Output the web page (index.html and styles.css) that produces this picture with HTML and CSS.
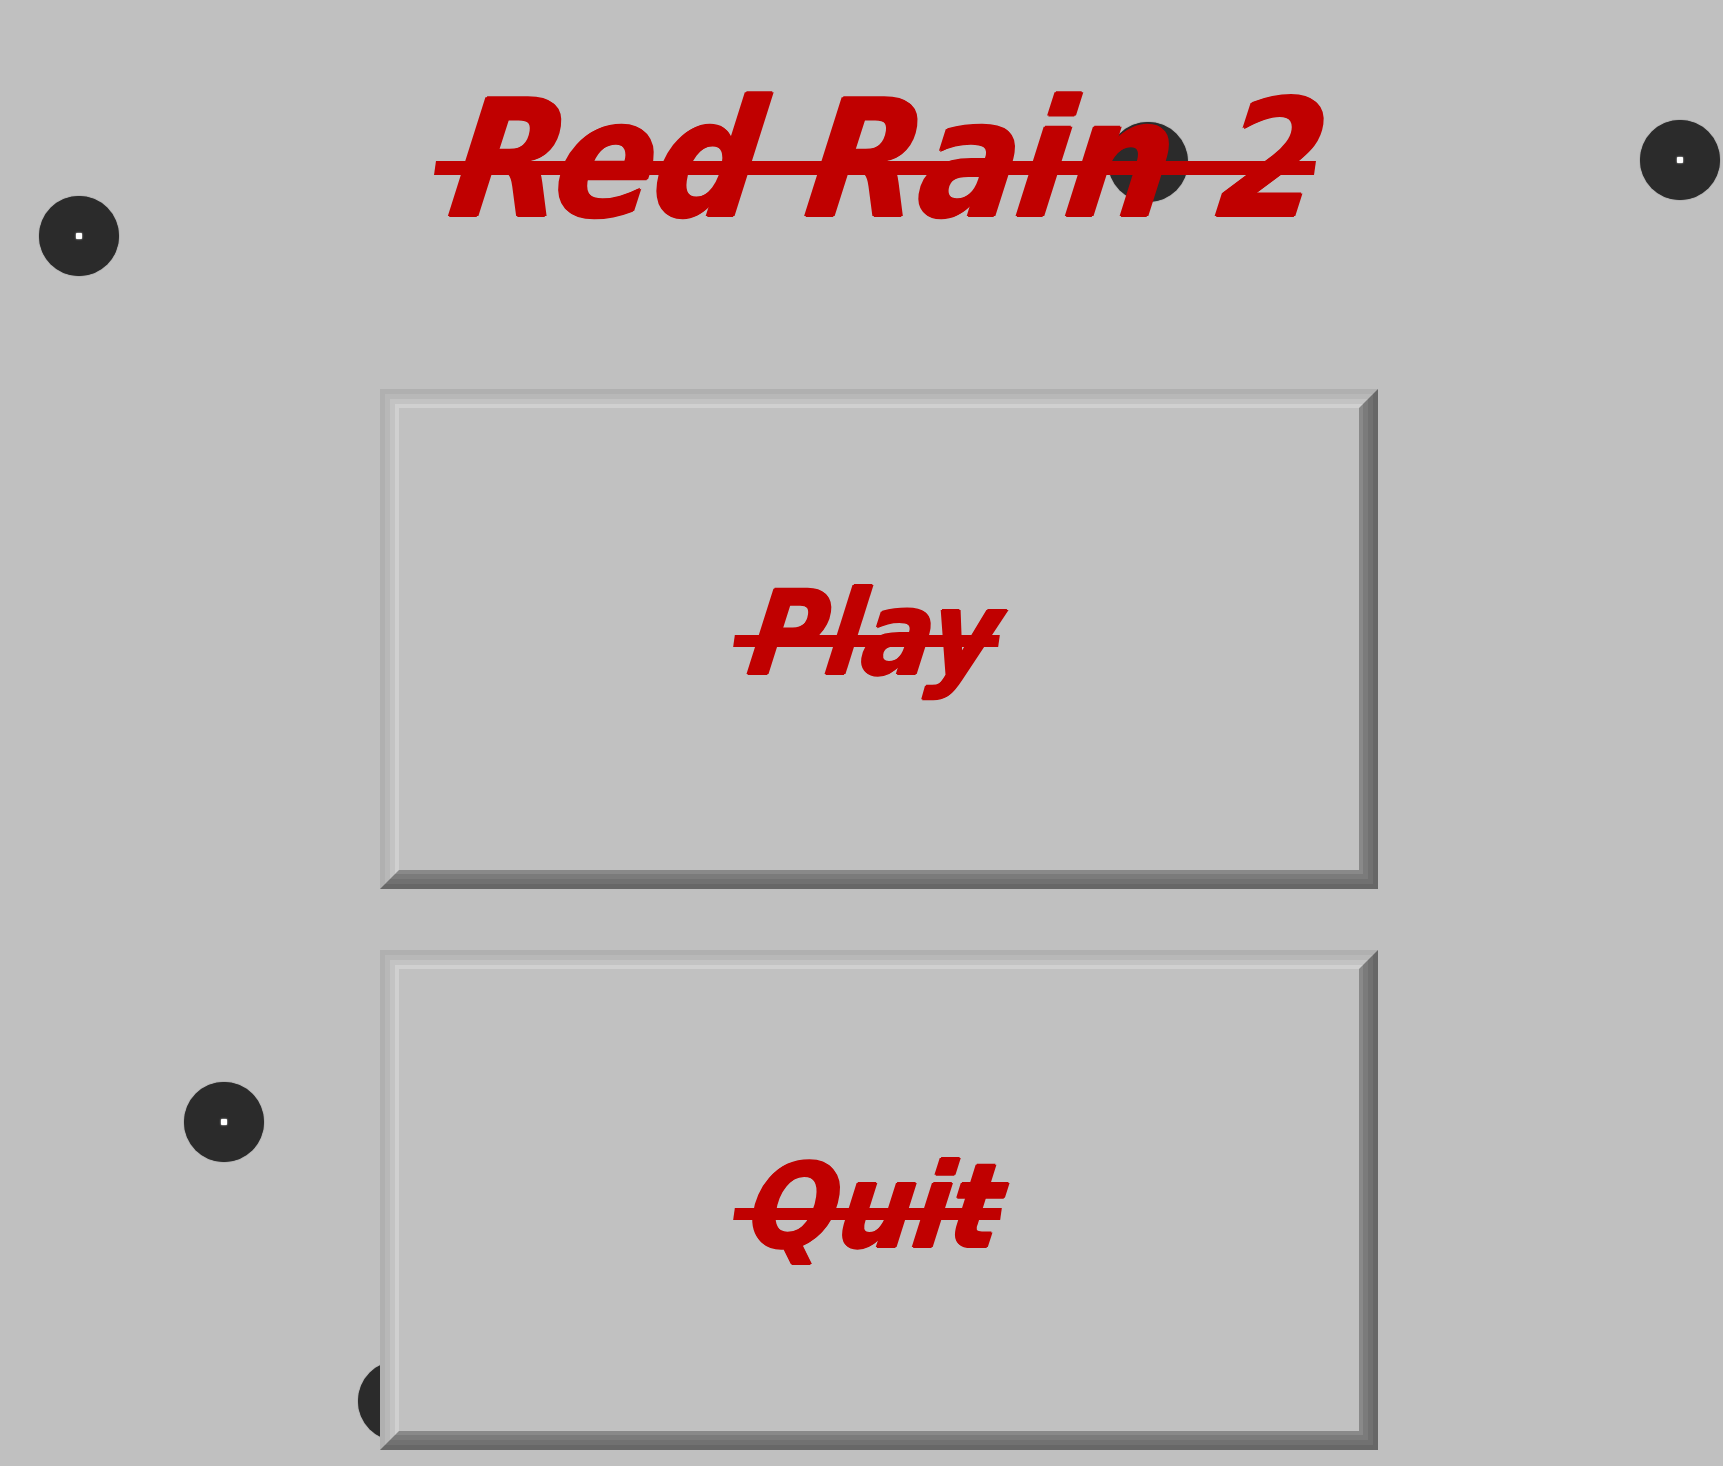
FILE: index.html
```html
<!DOCTYPE html>
<html lang="en">
<head>
<meta charset="utf-8">
<title>Red Rain 2</title>
<link rel="stylesheet" href="styles.css">
</head>
<body>
<div class="drops" aria-hidden="true">
  <span class="drop drop-1"></span>
  <span class="drop drop-2"></span>
  <span class="drop drop-3"></span>
  <span class="drop drop-4"></span>
  <span class="drop drop-5"></span>
</div>
<main class="menu">
  <h1 class="title"><span class="title-text">Red Rain 2</span></h1>
  <button class="btn btn-play" type="button">
    <span class="bevel b1"><span class="bevel b2"><span class="bevel b3"><span class="bevel b4">
      <span class="face"><span class="label">Play</span></span>
    </span></span></span></span>
  </button>
  <button class="btn btn-quit" type="button">
    <span class="bevel b1"><span class="bevel b2"><span class="bevel b3"><span class="bevel b4">
      <span class="face"><span class="label">Quit</span></span>
    </span></span></span></span>
  </button>
</main>
</body>
</html>
```
FILE: styles.css
```css
html, body {
  margin: 0;
  padding: 0;
}
body {
  background: #c0c0c0;
  min-height: 100vh;
  position: relative;
  overflow: hidden;
  font-family: "DejaVu Sans Condensed", "DejaVu Sans", sans-serif;
  font-stretch: condensed;
}

/* falling drops on the canvas */
.drops {
  position: absolute;
  inset: 0;
  z-index: 0;
}
.drop {
  position: absolute;
  width: 80px;
  height: 80px;
  margin: -40px 0 0 -40px;
  border-radius: 50%;
  background: #2b2b2b;
  box-shadow: 0 0 1px #2b2b2b;
}
.drop::after {
  content: "";
  position: absolute;
  left: 37px;
  top: 37px;
  width: 6px;
  height: 6px;
  border-radius: 1px;
  background: #fff;
  box-shadow: 0 0 2px #fff;
}
.drop-1 { left: 79px; top: 236px; }
.drop-2 { left: 1680px; top: 160px; }
.drop-3 { left: 1148px; top: 162px; }
.drop-4 { left: 224px; top: 1122px; }
.drop-5 { left: 398px; top: 1401px; }

/* menu column */
.menu {
  position: relative;
  z-index: 1;
  width: 998px;
  margin-left: 380px;
  display: flex;
  flex-direction: column;
  gap: 61px;
}
.title {
  margin: 0 0 -61px;
  height: 389px;
  box-sizing: border-box;
  padding: 78px 8px 0 0;
  font-size: 163px;
  line-height: 1;
  font-weight: bold;
  font-style: italic;
  color: #c00000;
  text-align: center;
  white-space: nowrap;
}
.title-text {
  position: relative;
  display: inline-block;
  letter-spacing: -1px;
  text-shadow: 1.5px 0 #c00000, -1.5px 0 #c00000, 0 1px #c00000, 0 -1px #c00000;
  transform-origin: 50% 90px;
  transform: translateX(13px) skewX(-8deg);
}
/* strike-through bar */
.title-text::after {
  content: "";
  position: absolute;
  left: -18px;
  right: 8px;
  top: 83px;
  height: 14px;
  background: #c00000;
}

.btn {
  display: block;
  width: 998px;
  height: 500px;
  padding: 0;
  margin: 0;
  border: 0;
  background: none;
  font: inherit;
  cursor: pointer;
}
.bevel {
  display: flex;
  box-sizing: border-box;
  width: 100%;
  height: 100%;
  border-style: solid;
}
.b1 { border-width: 5px; border-color: #b0b0b0 #676767 #676767 #b0b0b0; }
.b2 { border-width: 5px; border-color: #b8b8b8 #717171 #717171 #b8b8b8; }
.b3 { border-width: 5px; border-color: #c3c3c3 #7b7b7b #7b7b7b #c3c3c3; }
.b4 { border-width: 4px; border-color: #d0d0d0 #898989 #898989 #d0d0d0; }
.face {
  flex: 1;
  display: flex;
  align-items: center;
  justify-content: center;
  background: #c1c1c1;
}
.label {
  position: relative;
  display: inline-block;
  font-size: 117px;
  line-height: 1;
  font-weight: bold;
  font-style: italic;
  color: #c00000;
  text-shadow: 1.2px 0 #c00000, -1.2px 0 #c00000, 0 1px #c00000, 0 -1px #c00000;
  transform-origin: 50% 66px;
  transform: translateX(-4px) skewX(-8deg);
}
.label::after {
  content: "";
  position: absolute;
  left: -16px;
  right: 0;
  top: 60px;
  height: 12px;
  background: #c00000;
}
.btn-play .label { margin-bottom: 12px; }
.btn-quit .label { margin-top: 12px; }
```
